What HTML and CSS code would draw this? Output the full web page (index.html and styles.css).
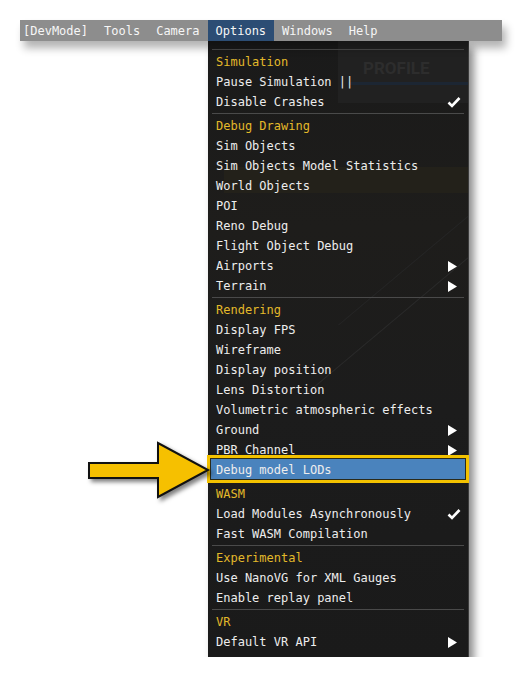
FILE: index.html
```html
<!DOCTYPE html>
<html lang="en">
<head>
<meta charset="UTF-8" />
<meta name="viewport" content="width=device-width, initial-scale=1" />
<title>DevMode - Options</title>
<link rel="stylesheet" href="styles.css">
</head>
<body>
<div class="stage">
  <div class="menubar">
    <span class="menu-title">[DevMode]</span>
    <span class="menu-title">Tools</span>
    <span class="menu-title">Camera</span>
    <span class="menu-title open">Options</span>
    <span class="menu-title">Windows</span>
    <span class="menu-title">Help</span>
  </div>

  <div class="dropdown">
    <!-- blurred game screen behind the menu -->
    <div class="backdrop">
      <div class="bd-panel"></div>
      <div class="bd-profile">PROFILE</div>
      <div class="bd-rule"></div>
      <div class="bd-band"></div>
      <div class="bd-streak"></div>
      <div class="bd-streak two"></div>
    </div>

    <div class="sep"></div>
    <div class="item header">Simulation</div>
    <div class="item">Pause Simulation ||</div>
    <div class="item">Disable Crashes <svg class="check" viewBox="0 0 14 12"><path d="M1.5 6.5 L5 10 L12.5 2"/></svg></div>

    <div class="sep"></div>
    <div class="item header">Debug Drawing</div>
    <div class="item">Sim Objects</div>
    <div class="item">Sim Objects Model Statistics</div>
    <div class="item">World Objects</div>
    <div class="item">POI</div>
    <div class="item">Reno Debug</div>
    <div class="item">Flight Object Debug</div>
    <div class="item">Airports <svg class="sub" viewBox="0 0 10 12"><polygon points="0,0 10,6 0,12"/></svg></div>
    <div class="item">Terrain <svg class="sub" viewBox="0 0 10 12"><polygon points="0,0 10,6 0,12"/></svg></div>

    <div class="sep"></div>
    <div class="item header">Rendering</div>
    <div class="item">Display FPS</div>
    <div class="item">Wireframe</div>
    <div class="item">Display position</div>
    <div class="item">Lens Distortion</div>
    <div class="item">Volumetric atmospheric effects</div>
    <div class="item">Ground <svg class="sub" viewBox="0 0 10 12"><polygon points="0,0 10,6 0,12"/></svg></div>
    <div class="item">PBR Channel <svg class="sub" viewBox="0 0 10 12"><polygon points="0,0 10,6 0,12"/></svg></div>
    <div class="item selected">Debug model LODs</div>

    <div class="sep"></div>
    <div class="item header">WASM</div>
    <div class="item">Load Modules Asynchronously <svg class="check" viewBox="0 0 14 12"><path d="M1.5 6.5 L5 10 L12.5 2"/></svg></div>
    <div class="item">Fast WASM Compilation</div>

    <div class="sep"></div>
    <div class="item header">Experimental</div>
    <div class="item">Use NanoVG for XML Gauges</div>
    <div class="item">Enable replay panel</div>

    <div class="sep"></div>
    <div class="item header">VR</div>
    <div class="item">Default VR API <svg class="sub" viewBox="0 0 10 12"><polygon points="0,0 10,6 0,12"/></svg></div>
  </div>

  <svg class="pointer" viewBox="0 0 140 70" width="140" height="70">
    <polygon points="9,28 78,28 78,8 128,35 78,62 78,43 9,43"/>
  </svg>
</div>
</body>
</html>
```

FILE: styles.css
```css
body {
  margin: 0;
  background: #fff;
  font-family: "DejaVu Sans Mono", "Liberation Mono", monospace;
  font-size: 12px;
}
.stage {
  position: relative;
  padding: 20px 0 0 20px;
}

/* top menu bar */
.menubar {
  display: flex;
  width: 482px;
  height: 21px;
  background: #8d8d8d;
  box-shadow: 4px 7px 8px rgba(0, 0, 0, 0.3);
  position: relative;
  z-index: 2;
}
.menu-title {
  padding: 2px 8px 0;
  line-height: 19px;
  color: #f6f6f6;
}
.menu-title:first-child {
  padding-left: 3px;
}
.menu-title.open {
  background: #2c4d74;
}

/* dropdown */
.dropdown {
  position: relative;
  margin-left: 188px;
  width: 260px;
  padding: 6px 0;
  background: #1c1c1c;
  border-right: 1px solid #3c3c3c;
  box-shadow: 5px 7px 8px rgba(0, 0, 0, 0.45);
  z-index: 1;
}
.backdrop {
  position: absolute;
  inset: 0;
  overflow: hidden;
  background: linear-gradient(180deg, #1a1a1a 0%, #1e1d1b 30%, #1c1c1c 60%, #1a1a1a 100%);
}
.bd-panel {
  position: absolute;
  left: 130px;
  top: 0;
  right: 0;
  height: 62px;
  background: #212121;
}
.bd-profile {
  position: absolute;
  left: 155px;
  top: 17px;
  font-family: "Roboto", sans-serif;
  font-weight: 700;
  font-size: 17px;
  color: #2d2d2d;
}
.bd-rule {
  position: absolute;
  left: 140px;
  right: 0;
  top: 41px;
  height: 3px;
  background: #1c2633;
}
.bd-band {
  position: absolute;
  left: 16px;
  right: 0;
  top: 126px;
  height: 26px;
  background: #23211a;
}
.bd-streak {
  position: absolute;
  left: 60px;
  top: 250px;
  width: 320px;
  height: 1px;
  background: #2a2a2a;
  transform: rotate(-40deg);
}
.bd-streak.two {
  left: 100px;
  top: 200px;
  width: 260px;
  background: #252525;
}

.sep {
  position: relative;
  height: 1px;
  margin: 2px 4px 1px;
  background: #4a4a4a;
}
.item {
  position: relative;
  display: flex;
  justify-content: space-between;
  align-items: center;
  box-sizing: border-box;
  height: 20px;
  padding: 2px 8px 0;
  line-height: 18px;
  color: #ededed;
  white-space: nowrap;
}
.item.header {
  color: #e3b92a;
}
.item.selected {
  background: #4a83bd;
  z-index: 1;
}
.item.selected::after {
  content: "";
  position: absolute;
  left: -1px;
  right: -1px;
  top: -4px;
  bottom: -4px;
  border: 3px solid #f3c200;
  box-shadow: inset 0 0 0 1px #2a2a1a;
}

.check {
  width: 14px;
  height: 12px;
  margin-right: -1px;
}
.check path {
  fill: none;
  stroke: #fff;
  stroke-width: 2.6;
}
.sub {
  width: 9px;
  height: 11px;
  margin-right: 3px;
  fill: #fff;
}

/* callout arrow */
.pointer {
  position: absolute;
  left: 80px;
  top: 435px;
  z-index: 3;
  filter: drop-shadow(3px 3px 2px rgba(0, 0, 0, 0.5));
}
.pointer polygon {
  fill: #f6c000;
  stroke: #111;
  stroke-width: 2;
  stroke-linejoin: miter;
}
```
